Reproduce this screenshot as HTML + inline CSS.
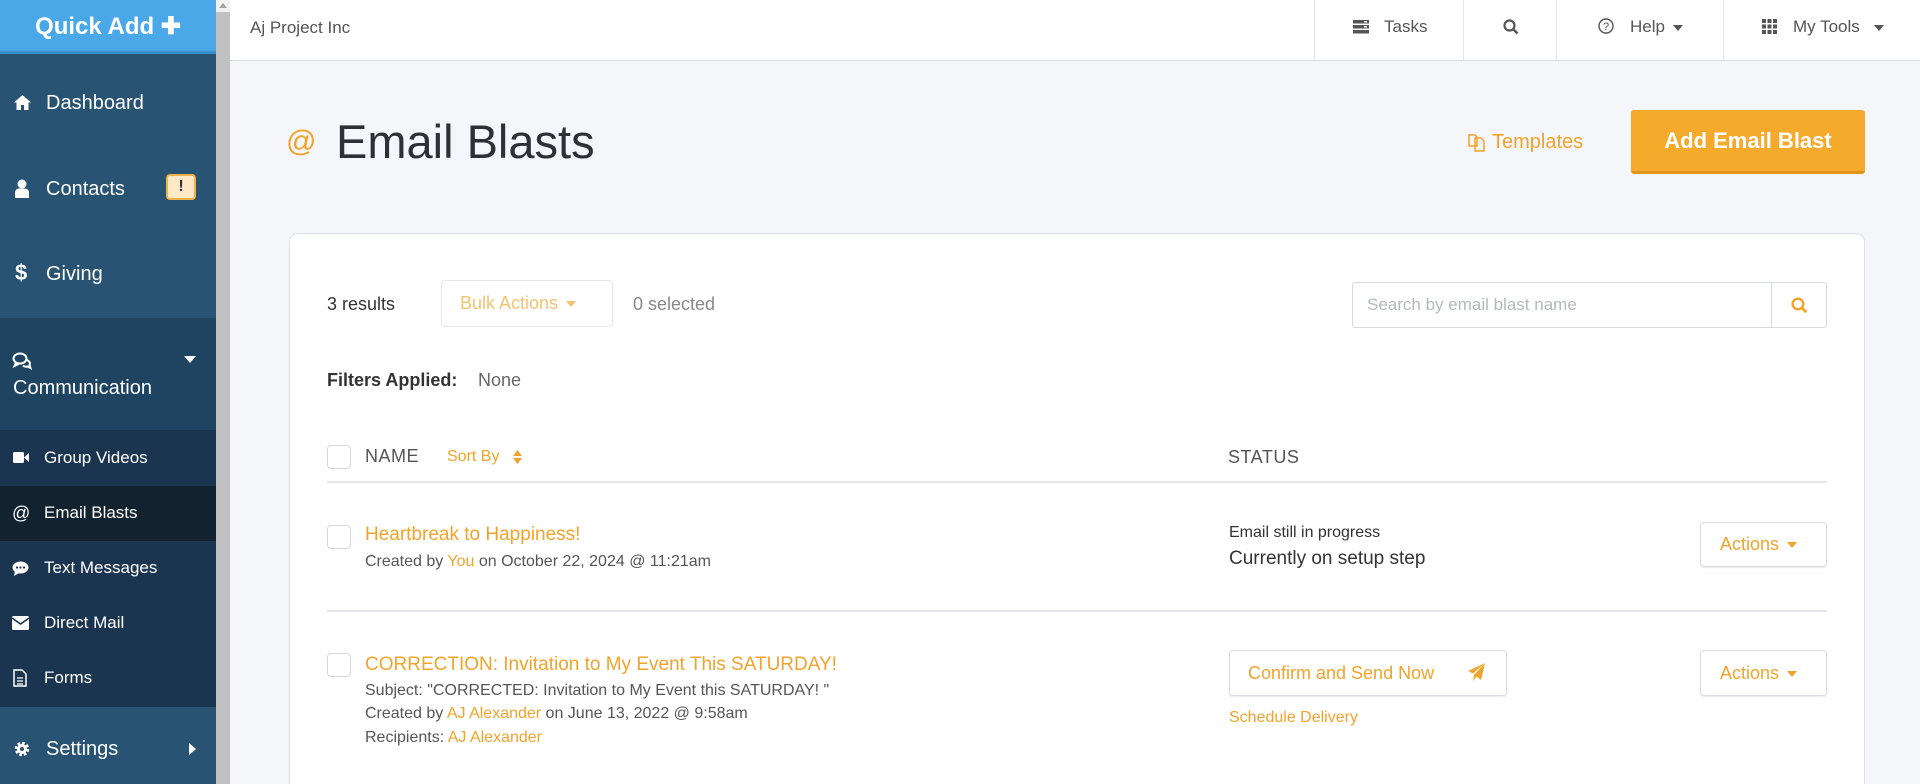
<!DOCTYPE html>
<html style="overflow:hidden;height:784px"><head><meta charset="utf-8"><style>
*{margin:0;padding:0;box-sizing:border-box}
body{width:1920px;height:784px;overflow:hidden;background:#f5f6fa;font-family:"Liberation Sans",sans-serif;position:relative;color:#333}
.a{position:absolute;white-space:nowrap}
.sb{position:absolute;left:0;top:0;width:216px;height:784px;background:#285373}
.o{color:#f2a32b}
.chk{position:absolute;width:24px;height:24px;border:1px solid #d5d8de;border-radius:4px;background:#fff}
.btn{position:absolute;border:1px solid #d9dce1;border-radius:4px;background:#fff;box-shadow:0 1px 1px rgba(0,0,0,.08)}
.caret{display:inline-block;width:0;height:0;border-left:5px solid transparent;border-right:5px solid transparent;border-top:6px solid currentColor;vertical-align:middle;margin-left:8px}
.si{color:#fff;font-size:17px}
</style></head><body>
<div class="sb"></div>
<div class="a" style="left:0;top:0;width:216px;height:54px;background:#4aa8e8;border-bottom:3px solid #3b8fc9"></div>
<div class="a" style="left:0;top:10px;width:216px;text-align:center;color:#fff;font-size:24px;font-weight:bold;line-height:34px">Quick Add ✚</div>
<div class="a" style="left:0;top:318px;width:216px;height:112px;background:#1f4461"></div>
<div class="a" style="left:0;top:430px;width:216px;height:277px;background:#1b3550"></div>
<div class="a" style="left:0;top:486px;width:216px;height:55px;background:#13222f"></div>
<svg class="a" style="left:13px;top:94px" width="19" height="17" viewBox="0 0 19 17"><path d="M9.5 1L1 8.5h2.5V16h4.5v-5h3v5h4.5V8.5H18z" fill="#fff"/></svg>
<div class="a si" style="left:46px;top:91px;font-size:20px;line-height:24px">Dashboard</div>
<svg class="a" style="left:14px;top:179px" width="16" height="20" viewBox="0 0 16 20"><circle cx="8" cy="5" r="4.5" fill="#fff"/><path d="M1 19v-5c0-3 2-4.5 4-4.5h6c2 0 4 1.5 4 4.5v5z" fill="#fff"/></svg>
<div class="a si" style="left:46px;top:177px;font-size:20px;line-height:24px">Contacts</div>
<div class="a" style="left:166px;top:174px;width:30px;height:26px;background:#fde8c8;border:2px solid #f3b04a;border-radius:4px;text-align:center;font-weight:bold;font-size:16px;line-height:22px;color:#333">!</div>
<div class="a si" style="left:15px;top:259px;font-size:22px;font-weight:bold;line-height:28px">$</div>
<div class="a si" style="left:46px;top:262px;font-size:20px;line-height:24px">Giving</div>
<svg class="a" style="left:12px;top:352px" width="20" height="18" viewBox="0 0 20 18"><ellipse cx="8" cy="6.5" rx="6.5" ry="5" fill="none" stroke="#fff" stroke-width="2"/><path d="M4 10.5l-1.5 3.5 4-2" fill="none" stroke="#fff" stroke-width="2"/><path d="M15 8c2.5 1 3.5 3 2.5 5l1 3-3-1.5c-1.5 0.5-3.5 0-4.5-1" fill="none" stroke="#fff" stroke-width="2"/></svg>
<svg class="a" style="left:184px;top:356px" width="12" height="8"><path d="M0 0h12L6 7z" fill="#fff"/></svg>
<div class="a si" style="left:13px;top:376px;font-size:20px;line-height:24px">Communication</div>
<svg class="a" style="left:13px;top:451px" width="16" height="13"><rect x="0" y="1" width="11" height="11" rx="1.5" fill="#fff"/><path d="M11 6.5L16 2v9z" fill="#fff"/></svg>
<div class="a si" style="left:44px;top:447px;line-height:22px">Group Videos</div>
<div class="a si" style="left:12px;top:502px;line-height:22px;font-size:18px">@</div>
<div class="a si" style="left:44px;top:502px;line-height:22px">Email Blasts</div>
<svg class="a" style="left:12px;top:561px" width="17" height="15"><ellipse cx="8.5" cy="6.5" rx="8" ry="6" fill="#fff"/><path d="M3 10l-1 5 5-3z" fill="#fff"/><circle cx="5" cy="6.5" r="1.1" fill="#1b3550"/><circle cx="8.5" cy="6.5" r="1.1" fill="#1b3550"/><circle cx="12" cy="6.5" r="1.1" fill="#1b3550"/></svg>
<div class="a si" style="left:44px;top:557px;line-height:22px">Text Messages</div>
<svg class="a" style="left:12px;top:616px" width="17" height="14"><rect width="17" height="14" rx="1.5" fill="#fff"/><path d="M0 2l8.5 6L17 2" fill="none" stroke="#1b3550" stroke-width="1.6"/></svg>
<div class="a si" style="left:44px;top:612px;line-height:22px">Direct Mail</div>
<svg class="a" style="left:13px;top:669px" width="14" height="18"><path d="M1 1h8l4 4v12H1z" fill="none" stroke="#fff" stroke-width="1.5"/><path d="M4 9h6M4 12h6M4 15h6" stroke="#fff" stroke-width="1.2"/></svg>
<div class="a si" style="left:44px;top:667px;line-height:22px">Forms</div>
<svg class="a" style="left:13px;top:740px" width="18" height="18" viewBox="0 0 18 18"><circle cx="9" cy="9" r="5.5" fill="none" stroke="#fff" stroke-width="3.5" stroke-dasharray="2.5 1.8"/><circle cx="9" cy="9" r="5" fill="#fff"/><circle cx="9" cy="9" r="2" fill="#285373"/></svg>
<div class="a si" style="left:46px;top:737px;font-size:20px;line-height:24px">Settings</div>
<svg class="a" style="left:189px;top:743px" width="7" height="12"><path d="M0 0l7 6-7 6z" fill="#fff"/></svg>
<div class="a" style="left:216px;top:0;width:14px;height:784px;background:#c1c1c1"></div>
<div class="a" style="left:216px;top:0;width:14px;height:12px;background:#f1f1f1"></div>
<svg class="a" style="left:219px;top:3px" width="8" height="5"><path d="M0 5L4 0l4 5z" fill="#a3a3a3"/></svg>
<div class="a" style="left:230px;top:0;width:1690px;height:61px;background:#fff;border-bottom:1px solid #dcdee3"></div>
<div class="a" style="left:250px;top:17px;font-size:17px;color:#555;line-height:22px">Aj Project Inc</div>
<div class="a" style="left:1314px;top:0;width:1px;height:60px;background:#e2e4e8"></div>
<div class="a" style="left:1463px;top:0;width:1px;height:60px;background:#e2e4e8"></div>
<div class="a" style="left:1556px;top:0;width:1px;height:60px;background:#e2e4e8"></div>
<div class="a" style="left:1723px;top:0;width:1px;height:60px;background:#e2e4e8"></div>
<svg class="a" style="left:1353px;top:20px" width="16" height="14"><rect y="0" width="16" height="3.5" fill="#555"/><rect y="5" width="16" height="3.5" fill="#555"/><rect y="10" width="16" height="3.5" fill="#555"/><rect x="11" y="1" width="3" height="1.5" fill="#fff"/><rect x="11" y="6" width="3" height="1.5" fill="#fff"/></svg>
<div class="a" style="left:1384px;top:16px;font-size:17px;color:#555;line-height:22px">Tasks</div>
<svg class="a" style="left:1503px;top:19px" width="16" height="16"><circle cx="6.5" cy="6.5" r="5" fill="none" stroke="#555" stroke-width="2.2"/><path d="M10 10l4.5 4.5" stroke="#555" stroke-width="2.6"/></svg>
<svg class="a" style="left:1598px;top:18px" width="16" height="16"><circle cx="8" cy="8" r="7" fill="none" stroke="#555" stroke-width="1.4"/><text x="8" y="12" font-size="11" text-anchor="middle" fill="#555" font-family="Liberation Sans">?</text></svg>
<div class="a" style="left:1630px;top:16px;font-size:17px;color:#555;line-height:22px">Help<span class="caret" style="color:#555"></span></div>
<svg class="a" style="left:1762px;top:19px" width="15" height="15"><g fill="#555"><rect x="0" y="0" width="4" height="4"/><rect x="5.5" y="0" width="4" height="4"/><rect x="11" y="0" width="4" height="4"/><rect x="0" y="5.5" width="4" height="4"/><rect x="5.5" y="5.5" width="4" height="4"/><rect x="11" y="5.5" width="4" height="4"/><rect x="0" y="11" width="4" height="4"/><rect x="5.5" y="11" width="4" height="4"/><rect x="11" y="11" width="4" height="4"/></g></svg>
<div class="a" style="left:1793px;top:16px;font-size:17px;color:#555;line-height:22px">My Tools<span class="caret" style="color:#555;margin-left:14px"></span></div>
<div class="a o" style="left:286px;top:125px;font-size:30px;line-height:34px">@</div>
<div class="a" style="left:336px;top:114px;font-size:47px;line-height:56px;color:#2d3035">Email Blasts</div>
<svg class="a" style="left:1468px;top:132px" width="18" height="20"><path d="M1 3h6l2 2v9H1z M7 6h6l3 3v10H7z" fill="none" stroke="#f2a32b" stroke-width="1.5"/></svg>
<div class="a o" style="left:1492px;top:130px;font-size:20px;line-height:24px">Templates</div>
<div class="a" style="left:1631px;top:110px;width:234px;height:64px;background:#f5aa2c;border-radius:3px;border-bottom:3px solid #e0961c;color:#fff;font-size:22px;font-weight:bold;text-align:center;line-height:62px">Add Email Blast</div>
<div class="a" style="left:289px;top:233px;width:1576px;height:560px;background:#fff;border:1px solid #dde0e6;border-radius:9px"></div>
<div class="a" style="left:327px;top:293px;font-size:18px;line-height:22px;color:#333">3 results</div>
<div class="btn" style="left:441px;top:280px;width:172px;height:47px;box-shadow:none;border-color:#e6e8ec"></div>
<div class="a" style="left:460px;top:292px;font-size:18px;line-height:22px;color:#f7c26f">Bulk Actions<span class="caret"></span></div>
<div class="a" style="left:633px;top:293px;font-size:18px;line-height:22px;color:#888">0 selected</div>
<div class="a" style="left:1352px;top:282px;width:475px;height:46px;border:1px solid #d6d9de;border-radius:3px;background:#fff"></div>
<div class="a" style="left:1771px;top:282px;width:1px;height:46px;background:#d6d9de"></div>
<div class="a" style="left:1367px;top:294px;font-size:17px;line-height:22px;color:#b5b8bd">Search by email blast name</div>
<svg class="a" style="left:1791px;top:297px" width="17" height="17"><circle cx="7" cy="7" r="5.3" fill="none" stroke="#f2a32b" stroke-width="2.4"/><path d="M10.8 10.8l4.5 4.5" stroke="#f2a32b" stroke-width="2.8"/></svg>
<div class="a" style="left:327px;top:369px;font-size:18px;line-height:22px;font-weight:bold;color:#333">Filters Applied:</div>
<div class="a" style="left:478px;top:369px;font-size:18px;line-height:22px;color:#666">None</div>
<div class="chk" style="left:327px;top:445px"></div>
<div class="a" style="left:365px;top:445px;font-size:18px;line-height:22px;color:#555;letter-spacing:.5px">NAME</div>
<div class="a o" style="left:447px;top:447px;font-size:16px;line-height:20px">Sort By</div>
<svg class="a" style="left:513px;top:450px" width="9" height="14"><path d="M0 6L4.5 0 9 6zM0 8l4.5 6L9 8z" fill="#f2a32b"/></svg>
<div class="a" style="left:1228px;top:446px;font-size:18px;line-height:22px;color:#555;letter-spacing:.5px">STATUS</div>
<div class="a" style="left:327px;top:481px;width:1500px;height:2px;background:#e3e5e9"></div>
<div class="chk" style="left:327px;top:525px"></div>
<div class="a o" style="left:365px;top:523px;font-size:19px;line-height:24px">Heartbreak to Happiness!</div>
<div class="a" style="left:365px;top:552px;font-size:16px;line-height:20px;color:#555">Created by <span class="o">You</span> on October 22, 2024 @ 11:21am</div>
<div class="a" style="left:1229px;top:523px;font-size:16px;line-height:20px;color:#333">Email still in progress</div>
<div class="a" style="left:1229px;top:547px;font-size:19px;line-height:24px;color:#333">Currently on setup step</div>
<div class="btn" style="left:1700px;top:522px;width:127px;height:45px"></div>
<div class="a o" style="left:1720px;top:533px;font-size:18px;line-height:22px">Actions<span class="caret"></span></div>
<div class="a" style="left:327px;top:610px;width:1500px;height:2px;background:#e3e5e9"></div>
<div class="chk" style="left:327px;top:653px"></div>
<div class="a o" style="left:365px;top:653px;font-size:19px;line-height:24px">CORRECTION: Invitation to My Event This SATURDAY!</div>
<div class="a" style="left:365px;top:681px;font-size:16px;line-height:20px;color:#555">Subject: "CORRECTED: Invitation to My Event this SATURDAY! "</div>
<div class="a" style="left:365px;top:704px;font-size:16px;line-height:20px;color:#555">Created by <span class="o">AJ Alexander</span> on June 13, 2022 @ 9:58am</div>
<div class="a" style="left:365px;top:728px;font-size:16px;line-height:20px;color:#555">Recipients: <span class="o">AJ Alexander</span></div>
<div class="btn" style="left:1229px;top:650px;width:278px;height:46px"></div>
<div class="a o" style="left:1248px;top:662px;font-size:18px;line-height:22px">Confirm and Send Now</div>
<svg class="a" style="left:1468px;top:663px" width="18" height="19"><path d="M17 0L0 8l5 2.5zM17 0L6 12l-1 6 3.5-4.5L13 17z" fill="#f2a32b"/></svg>
<div class="a o" style="left:1229px;top:708px;font-size:16px;line-height:20px">Schedule Delivery</div>
<div class="btn" style="left:1700px;top:650px;width:127px;height:46px"></div>
<div class="a o" style="left:1720px;top:662px;font-size:18px;line-height:22px">Actions<span class="caret"></span></div>
</body></html>
